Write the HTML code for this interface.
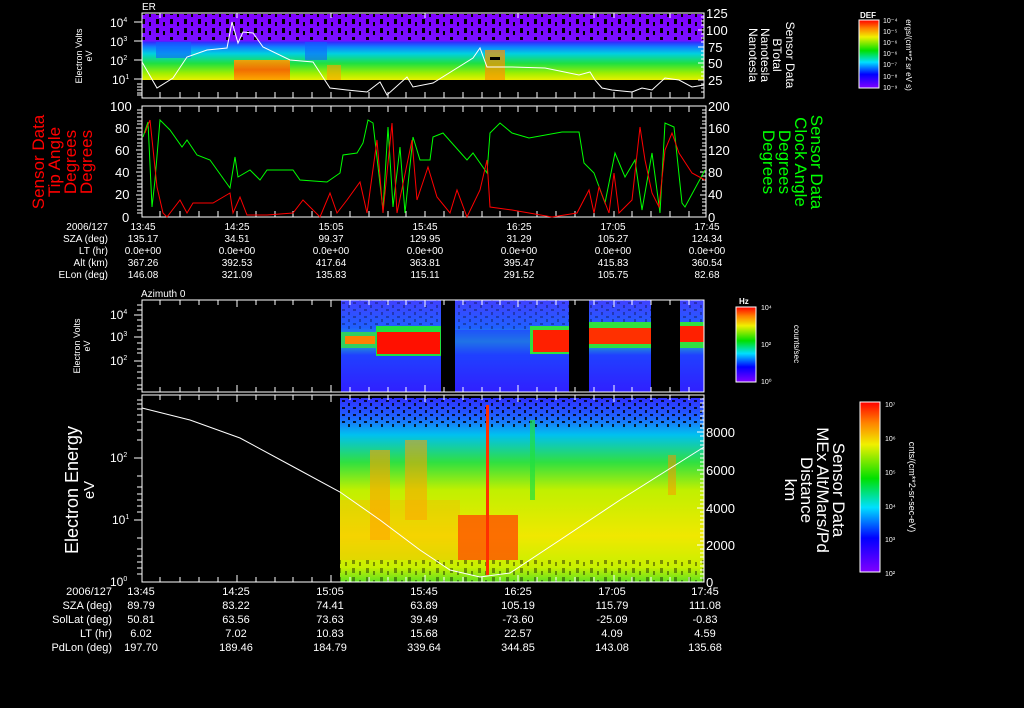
<!DOCTYPE html>
<html><head><meta charset="utf-8"><style>
html,body{margin:0;padding:0;background:#000;}
svg{display:block}
text{font-family:"Liberation Sans",sans-serif;fill:#fff}
</style></head><body>
<svg width="1024" height="708" viewBox="0 0 1024 708" xmlns="http://www.w3.org/2000/svg">
<defs>
<linearGradient id="p1" x1="0" y1="0" x2="0" y2="1">
<stop offset="0" stop-color="#8000ff"/><stop offset="0.4" stop-color="#7a10ff"/><stop offset="0.43" stop-color="#3030ff"/><stop offset="0.5" stop-color="#1080ff"/><stop offset="0.6" stop-color="#00d0e0"/><stop offset="0.75" stop-color="#20e040"/><stop offset="0.9" stop-color="#a0f000"/><stop offset="1" stop-color="#e8f000"/>
</linearGradient>
<linearGradient id="p3" x1="0" y1="0" x2="0" y2="1">
<stop offset="0" stop-color="#4040ff"/><stop offset="0.3" stop-color="#2060ff"/><stop offset="0.45" stop-color="#20c0c0"/><stop offset="0.6" stop-color="#2040ff"/><stop offset="1" stop-color="#3020ff"/>
</linearGradient>
<linearGradient id="p4" x1="0" y1="0" x2="0" y2="1">
<stop offset="0" stop-color="#3030ff"/><stop offset="0.1" stop-color="#2060ff"/><stop offset="0.2" stop-color="#00c0f0"/><stop offset="0.35" stop-color="#30e040"/><stop offset="0.5" stop-color="#c0f000"/><stop offset="0.75" stop-color="#f0e800"/><stop offset="0.92" stop-color="#c8f000"/><stop offset="1" stop-color="#60e020"/>
</linearGradient>
<linearGradient id="cb" x1="0" y1="1" x2="0" y2="0">
<stop offset="0" stop-color="#8000ff"/><stop offset="0.2" stop-color="#0000ff"/><stop offset="0.38" stop-color="#00e0ff"/><stop offset="0.55" stop-color="#00e000"/><stop offset="0.75" stop-color="#f0f000"/><stop offset="0.88" stop-color="#ff8000"/><stop offset="1" stop-color="#ff0000"/>
</linearGradient>
<linearGradient id="org" x1="0" y1="0" x2="0" y2="1">
<stop offset="0" stop-color="#ffa000"/><stop offset="0.5" stop-color="#ff6000"/><stop offset="1" stop-color="#ffa000"/>
</linearGradient>
<pattern id="spk" width="14" height="9" patternUnits="userSpaceOnUse">
<rect x="2" y="1" width="3" height="5" fill="#000"/><rect x="9" y="4" width="2" height="4" fill="#000"/>
</pattern>
<pattern id="spk2" width="11" height="7" patternUnits="userSpaceOnUse">
<rect x="1" y="1" width="3" height="2" fill="#000"/><rect x="7" y="4" width="2" height="3" fill="#000"/>
</pattern>
</defs>

<!-- PANEL 1 -->
<text x="142" y="10" font-size="10">ER</text>
<rect x="142" y="14" width="562" height="66" fill="url(#p1)"/>
<rect x="142" y="14" width="562" height="26" fill="url(#spk)"/>
<rect x="156" y="42" width="35" height="16" fill="#1060ff" opacity="0.6"/>
<rect x="305" y="42" width="22" height="18" fill="#1060ff" opacity="0.6"/>
<rect x="234" y="60" width="56" height="20" fill="url(#org)" opacity="0.9"/>
<rect x="327" y="65" width="14" height="15" fill="#ffa000" opacity="0.6"/>
<rect x="485" y="50" width="20" height="30" fill="#ff9000" opacity="0.7"/>
<rect x="490" y="57" width="10" height="3" fill="#000"/>
<polyline fill="none" stroke="#fff" stroke-width="1" points="142,62 157,88 173,78 187,57 207,50 227,48 232,22 238,43 243,32 253,33 263,47 290,60 313,62 330,88 347,90 367,92 380,82 387,95 407,77 413,87 433,83 473,58 480,48 487,67 512,67 545,68 579,75 590,72 595,80 602,88 612,90 632,92 642,88 652,90 665,78 679,80 692,87 704,85"/>
<rect x="142" y="13" width="562" height="85" fill="none" stroke="#fff"/>
<g stroke="#fff">
<path d="M160 98v-6M180 98v-6M199 98v-6M218 98v-6M237 98v-6M256 98v-6M275 98v-6M293 98v-6M312 98v-6M331 98v-6M350 98v-6M369 98v-6M388 98v-6M406 98v-6M425 98v-6M444 98v-6M463 98v-6M482 98v-6M500 98v-6M518 98v-6M537 98v-6M556 98v-6M575 98v-6M594 98v-6M614 98v-6M632 98v-6M651 98v-6M670 98v-6M689 98v-6"/>
<path d="M160 13v5M237 13v5M331 13v5M425 13v5M518 13v5M594 13v5M614 13v5M670 13v5"/>
<path d="M134 22h8M134 41h8M134 60h8M134 79h8M137 84h5M137 87h5M137 90h5M137 93h5M137 95h5"/>
<path d="M704 13h-6M704 30h-6M704 47h-6M704 63h-6M704 80h-6M704 17h-3M704 21h-3M704 25h-3M704 34h-3M704 38h-3M704 42h-3M704 51h-3M704 55h-3M704 59h-3M704 67h-3M704 72h-3M704 76h-3M704 84h-3M704 88h-3M704 92h-3"/>
</g>
<g font-size="12"><text x="110" y="27">10<tspan font-size="7" dy="-5">4</tspan></text><text x="110" y="46">10<tspan font-size="7" dy="-5">3</tspan></text><text x="110" y="65">10<tspan font-size="7" dy="-5">2</tspan></text><text x="112" y="84">10<tspan font-size="7" dy="-5">1</tspan></text></g>
<g font-size="13"><text x="706" y="18">125</text><text x="706" y="35">100</text><text x="708" y="52">75</text><text x="708" y="68">50</text><text x="708" y="85">25</text></g>
<text transform="translate(82,56) rotate(-90)" font-size="9" text-anchor="middle">Electron Volts</text>
<text transform="translate(92,56) rotate(-90)" font-size="9" text-anchor="middle">eV</text>
<g font-size="12" text-anchor="middle">
<text transform="translate(786,55) rotate(90)">Sensor Data</text>
<text transform="translate(773,55) rotate(90)">BTotal</text>
<text transform="translate(761,55) rotate(90)">Nanotesla</text>
<text transform="translate(749,55) rotate(90)">Nanotesla</text>
</g>
<!-- DEF colorbar -->
<text x="860" y="18" font-size="8" font-weight="bold">DEF</text>
<rect x="859" y="20" width="20" height="68" fill="url(#cb)" stroke="#fff"/>
<g font-size="7"><text x="883" y="23">10⁻⁴</text><text x="883" y="34">10⁻⁵</text><text x="883" y="45">10⁻⁶</text><text x="883" y="56">10⁻⁶</text><text x="883" y="67">10⁻⁷</text><text x="883" y="79">10⁻⁸</text><text x="883" y="90">10⁻⁹</text></g>
<text transform="translate(906,55) rotate(90)" font-size="8" text-anchor="middle">ergs/(cm**2 sr eV s)</text>

<!-- PANEL 2 -->
<rect x="142" y="106" width="564" height="111" fill="none" stroke="#fff"/>
<g stroke="#fff">
<path d="M237 106v6M331 106v6M425 106v6M518 106v6M614 106v6M160 106v6M180 106v6M199 106v6M218 106v6M256 106v6M275 106v6M293 106v6M312 106v6M350 106v6M369 106v6M388 106v6M406 106v6M444 106v6M463 106v6M482 106v6M500 106v6M537 106v6M556 106v6M575 106v6M594 106v6M632 106v6M651 106v6M670 106v6M689 106v6"/>
<path d="M160 217v-6M180 217v-6M199 217v-6M218 217v-6M237 217v-6M256 217v-6M275 217v-6M293 217v-6M312 217v-6M331 217v-6M350 217v-6M369 217v-6M388 217v-6M406 217v-6M425 217v-6M444 217v-6M463 217v-6M482 217v-6M500 217v-6M518 217v-6M537 217v-6M556 217v-6M575 217v-6M594 217v-6M614 217v-6M632 217v-6M651 217v-6M670 217v-6M689 217v-6"/>
<path d="M136 128h6M136 150h6M136 172h6M136 195h6M137 110h5M137 113h5M137 117h5M137 121h5M137 124h5M137 132h5M137 135h5M137 139h5M137 143h5M137 146h5M137 154h5M137 157h5M137 161h5M137 165h5M137 168h5M137 176h5M137 180h5M137 184h5M137 187h5M137 191h5M137 199h5M137 202h5M137 206h5M137 210h5M137 213h5"/>
<path d="M706 128h-6M706 150h-6M706 172h-6M706 195h-6M706 110h-4M706 113h-4M706 117h-4M706 121h-4M706 124h-4M706 132h-4M706 135h-4M706 139h-4M706 143h-4M706 146h-4M706 154h-4M706 157h-4M706 161h-4M706 165h-4M706 168h-4M706 176h-4M706 180h-4M706 184h-4M706 187h-4M706 191h-4M706 199h-4M706 202h-4M706 206h-4M706 210h-4M706 213h-4"/>
</g>
<g font-size="13"><text x="110" y="111">100</text><text x="115" y="133">80</text><text x="115" y="155">60</text><text x="115" y="177">40</text><text x="115" y="199">20</text><text x="122" y="222">0</text></g>
<g font-size="13"><text x="708" y="111">200</text><text x="708" y="133">160</text><text x="708" y="155">120</text><text x="708" y="177">80</text><text x="708" y="199">40</text><text x="708" y="222">0</text></g>
<polyline fill="none" stroke="#00ff00" stroke-width="1" points="143,137 148,122 152,207 155,180 160,120 170,130 182,147 187,140 197,155 210,160 230,188 235,157 238,177 250,170 260,180 267,170 293,170 300,180 327,182 340,173 343,155 357,153 363,143 368,120 373,123 383,210 388,127 393,207 400,147 405,213 413,137 420,160 430,160 433,137 443,133 467,160 473,153 487,173 490,133 500,123 512,133 529,138 562,132 579,132 584,163 594,173 605,203 615,153 625,177 635,160 642,210 652,153 660,213 665,123 674,127 682,203 685,207 705,170"/>
<polyline fill="none" stroke="#ff0000" stroke-width="1" points="145,133 150,120 157,187 163,213 167,217 180,200 187,213 193,203 213,203 230,193 233,213 240,197 247,215 267,215 293,213 303,200 320,217 330,193 337,213 347,200 360,182 367,213 377,140 383,213 392,123 397,213 412,140 417,200 428,167 437,197 450,213 457,190 467,217 480,190 487,160 490,207 512,210 552,217 577,213 589,190 594,213 599,187 609,213 614,173 619,213 632,200 640,127 645,160 652,193 659,207 665,150 672,133 679,153 692,173 705,180"/>
<g font-size="17" text-anchor="middle">
<text transform="translate(44,162) rotate(-90)" style="fill:#f00">Sensor Data</text>
<text transform="translate(60,162) rotate(-90)" style="fill:#f00">Tip Angle</text>
<text transform="translate(76,162) rotate(-90)" style="fill:#f00">Degrees</text>
<text transform="translate(92,162) rotate(-90)" style="fill:#f00">Degrees</text>
</g>
<g font-size="17" text-anchor="middle">
<text transform="translate(811,162) rotate(90)" style="fill:#0f0">Sensor Data</text>
<text transform="translate(795,162) rotate(90)" style="fill:#0f0">Clock Angle</text>
<text transform="translate(779,162) rotate(90)" style="fill:#0f0">Degrees</text>
<text transform="translate(763,162) rotate(90)" style="fill:#0f0">Degrees</text>
</g>

<!-- TABLE 1 -->
<g font-size="10" text-anchor="end">
<text x="108" y="230">2006/127</text><text x="108" y="242">SZA (deg)</text><text x="108" y="254">LT (hr)</text><text x="108" y="266">Alt (km)</text><text x="108" y="278">ELon (deg)</text>
</g>
<g font-size="10" text-anchor="middle">
<text x="143" y="230">13:45</text><text x="143" y="242">135.17</text><text x="143" y="254">0.0e+00</text><text x="143" y="266">367.26</text><text x="143" y="278">146.08</text>
<text x="237" y="230">14:25</text><text x="237" y="242">34.51</text><text x="237" y="254">0.0e+00</text><text x="237" y="266">392.53</text><text x="237" y="278">321.09</text>
<text x="331" y="230">15:05</text><text x="331" y="242">99.37</text><text x="331" y="254">0.0e+00</text><text x="331" y="266">417.64</text><text x="331" y="278">135.83</text>
<text x="425" y="230">15:45</text><text x="425" y="242">129.95</text><text x="425" y="254">0.0e+00</text><text x="425" y="266">363.81</text><text x="425" y="278">115.11</text>
<text x="519" y="230">16:25</text><text x="519" y="242">31.29</text><text x="519" y="254">0.0e+00</text><text x="519" y="266">395.47</text><text x="519" y="278">291.52</text>
<text x="613" y="230">17:05</text><text x="613" y="242">105.27</text><text x="613" y="254">0.0e+00</text><text x="613" y="266">415.83</text><text x="613" y="278">105.75</text>
<text x="707" y="230">17:45</text><text x="707" y="242">124.34</text><text x="707" y="254">0.0e+00</text><text x="707" y="266">360.54</text><text x="707" y="278">82.68</text>
</g>

<!-- PANEL 3 -->
<text x="141" y="297" font-size="10">Azimuth 0</text>
<rect x="341" y="300" width="363" height="92" fill="url(#p3)"/>
<rect x="341" y="300" width="363" height="30" fill="url(#spk2)" opacity="0.3"/>
<rect x="341" y="332" width="35" height="16" fill="#30d060"/>
<rect x="345" y="336" width="30" height="8" fill="#ff8000"/>
<rect x="376" y="326" width="65" height="30" fill="#20e040"/>
<rect x="377" y="332" width="63" height="22" fill="#ff1000"/>
<rect x="530" y="326" width="40" height="28" fill="#30e040"/>
<rect x="533" y="330" width="36" height="22" fill="#ff2000"/>
<rect x="589" y="322" width="62" height="26" fill="#30e040"/>
<rect x="589" y="328" width="62" height="16" fill="#ff3000"/>
<rect x="680" y="322" width="24" height="26" fill="#30e040"/>
<rect x="680" y="326" width="24" height="16" fill="#ff2000"/>
<rect x="455" y="330" width="75" height="30" fill="#2040ff" opacity="0.6"/>
<rect x="441" y="300" width="14" height="92" fill="#000"/>
<rect x="569" y="300" width="20" height="92" fill="#000"/>
<rect x="651" y="300" width="29" height="92" fill="#000"/>
<rect x="142" y="300" width="562" height="92" fill="none" stroke="#fff"/>
<g stroke="#fff">
<path d="M160 300v5M180 300v5M199 300v5M218 300v5M237 300v7M256 300v5M275 300v5M293 300v5M312 300v5M331 300v7M350 300v5M369 300v5M388 300v5M406 300v5M425 300v7M444 300v5M463 300v5M482 300v5M500 300v5M518 300v7M537 300v5M556 300v5M575 300v5M594 300v5M614 300v7M632 300v5M651 300v5M670 300v5M689 300v5"/>
<path d="M160 392v-5M180 392v-5M199 392v-5M218 392v-5M237 392v-7M256 392v-5M275 392v-5M293 392v-5M312 392v-5M331 392v-7M350 392v-5M369 392v-5M388 392v-5M406 392v-5M425 392v-7M444 392v-5M463 392v-5M482 392v-5M500 392v-5M518 392v-7M537 392v-5M556 392v-5M575 392v-5M594 392v-5M614 392v-7M632 392v-5M651 392v-5M670 392v-5M689 392v-5"/>
<path d="M134 315h8M134 337h8M134 361h8M137 305h5M137 310h5M137 320h5M137 326h5M137 330h5M137 343h5M137 349h5M137 353h5M137 366h5M137 372h5M137 378h5M137 385h5M137 389h5"/>
</g>
<g font-size="12"><text x="110" y="319">10<tspan font-size="7" dy="-5">4</tspan></text><text x="110" y="341">10<tspan font-size="7" dy="-5">3</tspan></text><text x="110" y="365">10<tspan font-size="7" dy="-5">2</tspan></text></g>
<text transform="translate(80,346) rotate(-90)" font-size="9" text-anchor="middle">Electron Volts</text>
<text transform="translate(90,346) rotate(-90)" font-size="9" text-anchor="middle">eV</text>
<text x="739" y="304" font-size="8" font-weight="bold">Hz</text>
<rect x="736" y="307" width="20" height="75" fill="url(#cb)" stroke="#fff"/>
<g font-size="7"><text x="761" y="310">10⁴</text><text x="761" y="347">10²</text><text x="761" y="384">10⁰</text></g>
<text transform="translate(794,344) rotate(90)" font-size="8" text-anchor="middle">counts/sec</text>

<!-- PANEL 4 -->
<rect x="340" y="398" width="364" height="184" fill="url(#p4)"/>
<rect x="340" y="398" width="364" height="30" fill="url(#spk2)" opacity="0.8"/>
<rect x="340" y="560" width="364" height="22" fill="url(#spk)" opacity="0.4"/>
<rect x="370" y="450" width="20" height="90" fill="#ffa000" opacity="0.6"/>
<rect x="405" y="440" width="22" height="80" fill="#ffa000" opacity="0.55"/>
<rect x="340" y="500" width="120" height="60" fill="#ffb000" opacity="0.35"/>
<rect x="458" y="515" width="60" height="45" fill="#ff5000" opacity="0.8"/>
<rect x="486" y="405" width="3" height="170" fill="#ff3000"/>
<rect x="530" y="420" width="5" height="80" fill="#20e040" opacity="0.7"/>
<rect x="668" y="455" width="8" height="40" fill="#ff9000" opacity="0.5"/>
<polyline fill="none" stroke="#fff" stroke-width="1" points="142,408 190,420 240,438 290,465 340,492 380,520 420,550 450,570 480,577 510,573 560,540 620,500 704,447"/>
<rect x="142" y="395" width="562" height="187" fill="none" stroke="#fff"/>
<g stroke="#fff">
<path d="M160 395v5M180 395v5M199 395v5M218 395v5M237 395v7M256 395v5M275 395v5M293 395v5M312 395v5M331 395v7M350 395v5M369 395v5M388 395v5M406 395v5M425 395v7M444 395v5M463 395v5M482 395v5M500 395v5M518 395v7M537 395v5M556 395v5M575 395v5M594 395v5M614 395v7M632 395v5M651 395v5M670 395v5M689 395v5"/>
<path d="M160 582v-5M180 582v-5M199 582v-5M218 582v-5M237 582v-7M256 582v-5M275 582v-5M293 582v-5M312 582v-5M331 582v-7M350 582v-5M369 582v-5M388 582v-5M406 582v-5M425 582v-7M444 582v-5M463 582v-5M482 582v-5M500 582v-5M518 582v-7M537 582v-5M556 582v-5M575 582v-5M594 582v-5M614 582v-7M632 582v-5M651 582v-5M670 582v-5M689 582v-5"/>
<path d="M134 458h8M134 520h8M137 400h5M137 404h5M137 409h5M137 415h5M137 422h5M137 430h5M137 440h5M137 476h5M137 487h5M137 494h5M137 500h5M137 506h5M137 512h5M137 538h5M137 549h5M137 556h5M137 562h5M137 568h5M137 574h5"/>
<path d="M704 432h-7M704 470h-7M704 508h-7M704 545h-7M704 582h-7M704 399h-4M704 403h-4M704 407h-4M704 411h-4M704 416h-4M704 420h-4M704 424h-4M704 428h-4M704 436h-4M704 441h-4M704 445h-4M704 449h-4M704 454h-4M704 458h-4M704 462h-4M704 466h-4M704 474h-4M704 479h-4M704 483h-4M704 487h-4M704 491h-4M704 495h-4M704 500h-4M704 504h-4M704 512h-4M704 516h-4M704 520h-4M704 524h-4M704 529h-4M704 533h-4M704 537h-4M704 541h-4M704 549h-4M704 553h-4M704 557h-4M704 562h-4M704 566h-4M704 570h-4M704 574h-4M704 578h-4"/>
</g>
<g font-size="12"><text x="110" y="462">10<tspan font-size="7" dy="-5">2</tspan></text><text x="112" y="524">10<tspan font-size="7" dy="-5">1</tspan></text><text x="110" y="586">10<tspan font-size="7" dy="-5">0</tspan></text></g>
<g font-size="13"><text x="706" y="437">8000</text><text x="706" y="475">6000</text><text x="706" y="513">4000</text><text x="706" y="550">2000</text><text x="706" y="587">0</text></g>
<text transform="translate(78,490) rotate(-90)" font-size="18" text-anchor="middle">Electron Energy</text>
<text transform="translate(94,490) rotate(-90)" font-size="15" text-anchor="middle">eV</text>
<g font-size="17" text-anchor="middle">
<text transform="translate(833,490) rotate(90)">Sensor Data</text>
<text transform="translate(817,490) rotate(90)">MEx Alt/Mars/Pd</text>
<text transform="translate(801,490) rotate(90)">Distance</text>
<text transform="translate(785,490) rotate(90)">km</text>
</g>
<rect x="860" y="402" width="20" height="170" fill="url(#cb)" stroke="#fff"/>
<g font-size="7"><text x="885" y="407">10⁷</text><text x="885" y="441">10⁶</text><text x="885" y="475">10⁵</text><text x="885" y="509">10⁴</text><text x="885" y="542">10³</text><text x="885" y="576">10²</text></g>
<text transform="translate(909,487) rotate(90)" font-size="9" text-anchor="middle">cnts/(cm**2-sr-sec-eV)</text>

<!-- TABLE 2 -->
<g font-size="11" text-anchor="end">
<text x="112" y="595">2006/127</text><text x="112" y="609">SZA (deg)</text><text x="112" y="623">SolLat (deg)</text><text x="112" y="637">LT (hr)</text><text x="112" y="651">PdLon (deg)</text>
</g>
<g font-size="11" text-anchor="middle">
<text x="141" y="595">13:45</text><text x="141" y="609">89.79</text><text x="141" y="623">50.81</text><text x="141" y="637">6.02</text><text x="141" y="651">197.70</text>
<text x="236" y="595">14:25</text><text x="236" y="609">83.22</text><text x="236" y="623">63.56</text><text x="236" y="637">7.02</text><text x="236" y="651">189.46</text>
<text x="330" y="595">15:05</text><text x="330" y="609">74.41</text><text x="330" y="623">73.63</text><text x="330" y="637">10.83</text><text x="330" y="651">184.79</text>
<text x="424" y="595">15:45</text><text x="424" y="609">63.89</text><text x="424" y="623">39.49</text><text x="424" y="637">15.68</text><text x="424" y="651">339.64</text>
<text x="518" y="595">16:25</text><text x="518" y="609">105.19</text><text x="518" y="623">-73.60</text><text x="518" y="637">22.57</text><text x="518" y="651">344.85</text>
<text x="612" y="595">17:05</text><text x="612" y="609">115.79</text><text x="612" y="623">-25.09</text><text x="612" y="637">4.09</text><text x="612" y="651">143.08</text>
<text x="705" y="595">17:45</text><text x="705" y="609">111.08</text><text x="705" y="623">-0.83</text><text x="705" y="637">4.59</text><text x="705" y="651">135.68</text>
</g>
</svg>
</body></html>
